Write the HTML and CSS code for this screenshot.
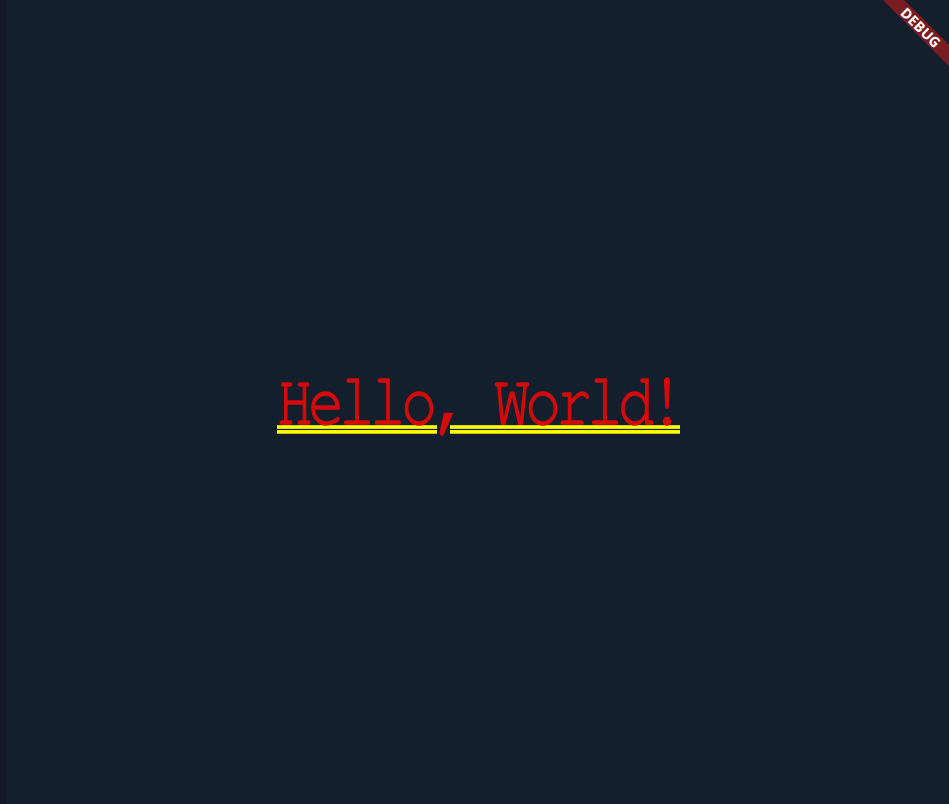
FILE: index.html
```html
<!DOCTYPE html>
<html>
<head>
<meta charset="utf-8">
<link rel="stylesheet" href="styles.css">
</head>
<body>
<div class="app">
  <div class="edge"></div>
  <main class="stage">
    <span class="hello">Hello, World!</span>
  </main>
</div>
<div class="banner">DEBUG</div>
</body>
</html>
```
FILE: styles.css
```css
html, body {
  margin: 0;
  padding: 0;
  height: 100%;
  overflow: hidden;
}
body {
  background: #141f2d;
}
.app {
  display: flex;
  height: 804px;
}
.edge {
  width: 6px;
  background: #111a26;
  flex: none;
}
.stage {
  flex: 1;
  display: flex;
  align-items: center;
  justify-content: center;
}
.hello {
  font-family: "FreeMono", "Liberation Mono", monospace;
  font-size: 60px;
  letter-spacing: -5px;
  color: #d40b0b;
  -webkit-text-stroke: 1.2px #d40b0b;
  transform: translate(1px, 0px) scaleY(1.22);
  text-decoration-line: underline;
  text-decoration-style: double;
  text-decoration-color: #ffff00;
  text-decoration-thickness: 2.6px;
  text-underline-offset: 1px;
}
.banner {
  position: absolute;
  left: 865px;
  top: 20px;
  width: 112px;
  height: 15px;
  background: #7a1d23;
  color: #fff;
  font-family: "Open Sans", "DejaVu Sans", sans-serif;
  font-weight: 700;
  font-size: 14px;
  line-height: 15px;
  letter-spacing: 0.3px;
  text-align: center;
  transform: rotate(45deg);
}
```
